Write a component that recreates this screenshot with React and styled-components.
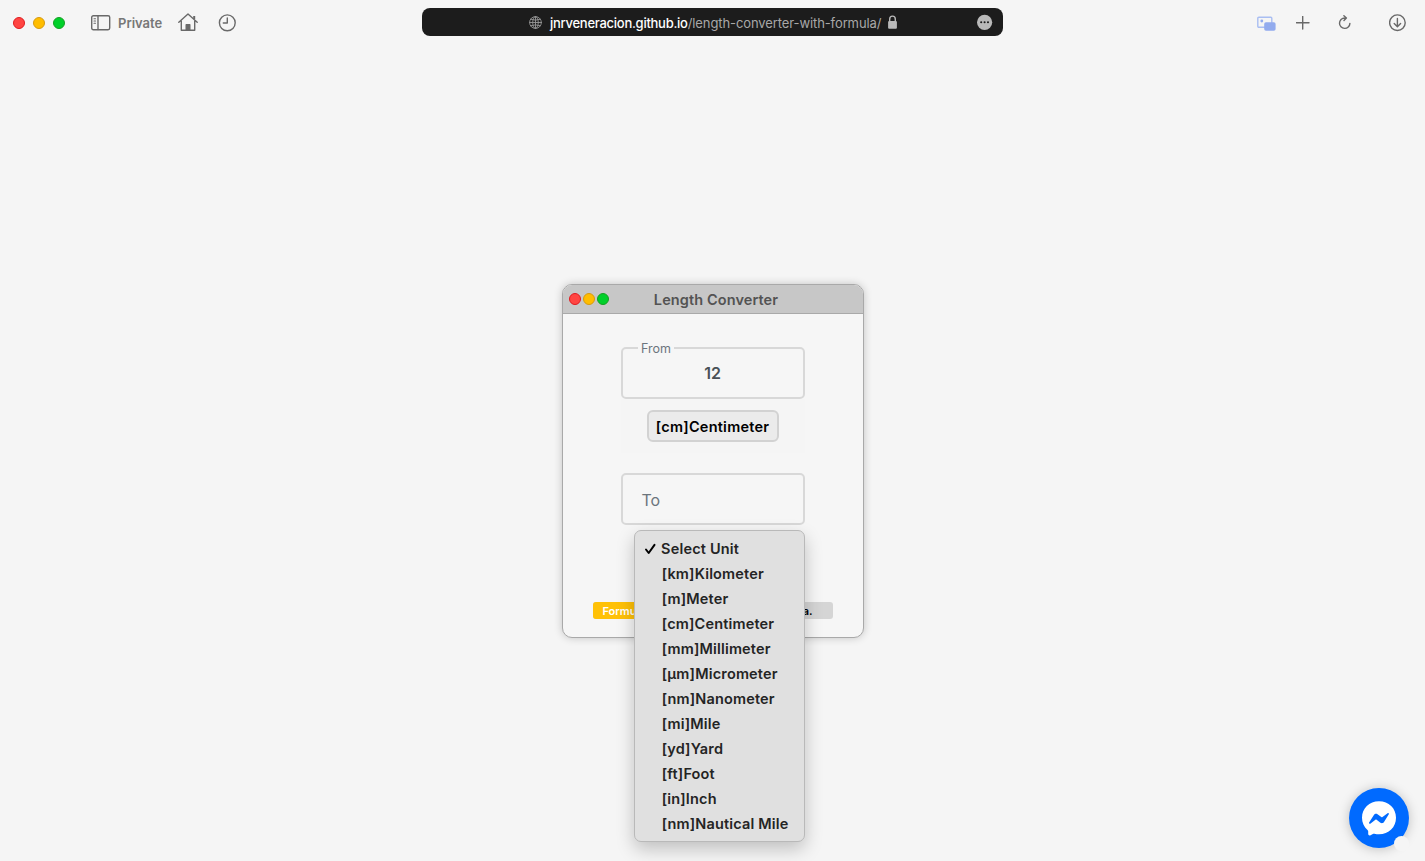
import React from "react";
import styled, { createGlobalStyle } from "styled-components";

const GlobalStyle = createGlobalStyle`
  * { box-sizing: border-box; }
  body {
    margin: 0;
    background: #f5f5f5;
    font-family: Inter, "Liberation Sans", sans-serif;
    overflow: hidden;
  }
`;

const Page = styled.div`
  height: 861px;
  display: flex;
  flex-direction: column;
  align-items: center;
  background: #f5f5f5;
`;

const Toolbar = styled.header`
  width: 100%;
  height: 45px;
  flex: none;
  display: grid;
  grid-template-columns: 422px 581px 1fr;
`;

const ToolGroup = styled.div`
  display: flex;
  align-items: center;
  height: 45px;
  padding-left: ${(p) => p.$inset}px;
  color: #696969;
`;

const Lights = styled.div`
  display: flex;
  gap: ${(p) => p.$gap}px;
`;

const Light = styled.span`
  width: 12px;
  height: 12px;
  border-radius: 50%;
  background: ${(p) => p.$fill};
  border: 1px solid ${(p) => p.$edge};
`;

const Icon = styled.svg`
  flex: none;
  display: block;
  margin-left: ${(p) => p.$gap || 0}px;
  fill: none;
  stroke: currentColor;
  stroke-width: ${(p) => p.$weight || 1.4};
  stroke-linecap: round;
  stroke-linejoin: round;
`;

const PrivateLabel = styled.span`
  margin-left: 7px;
  width: 45px;
  font-size: 13px;
  font-weight: 600;
  line-height: 18px;
  padding-top: 1px;
  color: #777;
`;

const AddressBar = styled.div`
  margin-top: 8px;
  height: 28px;
  border-radius: 8px;
  background: #1c1c1c;
  display: flex;
  align-items: center;
  padding: 0 10px 0 107px;
  color: #b9b9b9;
`;

const Url = styled.span`
  margin-left: 8px;
  width: 332px;
  font-size: 13px;
  line-height: 18px;
  padding-top: 2px;
  color: #a8a8a8;
  white-space: nowrap;
  letter-spacing: -0.1px;
`;

const Host = styled.span`
  color: #fff;
  font-weight: 500;
  letter-spacing: -0.27px;
`;

const Spacer = styled.span`
  flex: 1;
`;

const Window = styled.main`
  position: relative;
  width: 302px;
  height: 354px;
  margin-top: 239px;
  flex: none;
  border: 1px solid #a9a9a9;
  border-radius: 10px;
  background: #f6f6f6;
  box-shadow: 0 0 9px rgba(0, 0, 0, 0.2);
`;

const TitleBar = styled.div`
  height: 29px;
  display: grid;
  grid-template-columns: 47px 1fr 46px;
  align-items: center;
  padding-left: 6px;
  background: #c7c7c7;
  border-bottom: 1px solid #a9a9a9;
  border-radius: 9px 9px 0 0;
`;

const Title = styled.h1`
  margin: 0;
  padding-top: 1px;
  text-align: center;
  font-size: 14.5px;
  line-height: 20px;
  font-weight: 600;
  color: #535353;
  letter-spacing: 0.1px;
`;

const Form = styled.div`
  display: flex;
  flex-direction: column;
  align-items: center;
  padding-top: 33px;
`;

const Field = styled.div`
  position: relative;
  width: 184px;
  height: 52px;
  border: 2px solid #d8d8d8;
  border-radius: 5px;
  padding: ${(p) => (p.$filled ? 0 : 2)}px 19px 0;
  display: flex;
  align-items: center;
  justify-content: ${(p) => (p.$filled ? "center" : "flex-start")};
  font-size: 16px;
  font-weight: ${(p) => (p.$filled ? 600 : 400)};
  color: ${(p) => (p.$filled ? "#495057" : "#6c757d")};
`;

const FieldLabel = styled.span`
  position: absolute;
  left: 15px;
  top: -8px;
  padding: 0 3px 0 3.5px;
  background: #f6f6f6;
  font-size: 12.5px;
  font-weight: 400;
  line-height: 16px;
  color: #6c757d;
`;

const UnitArea = styled.div`
  width: 184px;
  height: 54px;
  margin-bottom: 20px;
  display: flex;
  justify-content: center;
  align-items: center;
  background: #f5f5f5;
`;

const UnitButton = styled.button`
  width: 132px;
  height: 32px;
  padding: 1px 0 0;
  border: 2px solid #d2d2d2;
  border-radius: 6px;
  background: #ebebeb;
  color: #000;
  font: 600 14.5px/20px Inter, sans-serif;
  letter-spacing: 0.24px;
  white-space: nowrap;
`;

const FormulaBar = styled.div`
  width: 240px;
  height: 17px;
  margin-top: 77px;
  display: flex;
  justify-content: space-between;
  font-size: 11px;
  line-height: 19px;
  border-radius: 3px;
  overflow: hidden;
  background: #d5d5d5;
  color: #000;
  font-weight: 600;
`;

const FormulaTag = styled.span`
  width: 60px;
  padding-left: 10px;
  color: #fff;
  background: #ffc107;
`;

const FormulaText = styled.span`
  padding-right: 20px;
`;

const Menu = styled.ul`
  position: absolute;
  left: 71px;
  top: 245px;
  width: 171px;
  height: 312px;
  margin: 0;
  padding: 5px 0;
  list-style: none;
  border: 1px solid #b9b9b9;
  border-radius: 7px;
  background: #e0e0e0;
  box-shadow: 0 7px 18px rgba(0, 0, 0, 0.22);
`;

const Option = styled.li`
  height: 25px;
  display: grid;
  grid-template-columns: ${(p) => (p.$checked ? 17.6 : 18.2)}px 1fr;
  align-items: center;
  padding: 1px 0 0 9px;
  font-size: 14.5px;
  line-height: 20px;
  font-weight: 600;
  color: #242424;
  white-space: nowrap;
`;

const OptionText = styled.span`
  grid-column: 2;
  letter-spacing: 0.17px;
`;

const Messenger = styled.button`
  position: fixed;
  right: 16px;
  bottom: 13px;
  width: 60px;
  height: 60px;
  padding: 0;
  border: 0;
  border-radius: 50%;
  background: #006aff;
  box-shadow: 0 1px 12px rgba(0, 0, 0, 0.22);
`;

const StatusDot = styled.span`
  position: absolute;
  right: 0;
  bottom: -3px;
  width: 15px;
  height: 15px;
  border-radius: 50%;
  background: #f5f5f5;
`;

const units = [
  "Select Unit", "[km]Kilometer", "[m]Meter", "[cm]Centimeter",
  "[mm]Millimeter", "[µm]Micrometer", "[nm]Nanometer", "[mi]Mile",
  "[yd]Yard", "[ft]Foot", "[in]Inch", "[nm]Nautical Mile",
];

function TrafficLights({ gap }) {
  return (
    <Lights $gap={gap}>
      <Light $fill="#ff4542" $edge="#e01b1f" />
      <Light $fill="#ffbd00" $edge="#d69a10" />
      <Light $fill="#00d02a" $edge="#15a022" />
    </Lights>
  );
}

export default function App() {
  return (
    <Page>
      <GlobalStyle />
      <Toolbar>
        <ToolGroup $inset={13}>
          <TrafficLights gap={8} />
          <Icon $gap={26} width="20" height="16" viewBox="0 0 20 16">
            <rect x="0.7" y="0.7" width="18" height="14" rx="1.6" />
            <path d="M7 1v13.5" />
            <path d="M3 3.700h1.500M3 6h1.500M3 8.300h1.500" strokeWidth="1.1" />
          </Icon>
          <PrivateLabel>Private</PrivateLabel>
          <Icon $gap={15} width="20" height="19" viewBox="0 0 20 19">
            <path d="M.8 9.200 10 1l9.200 8.200M3.300 7.700v9.500h13.400V7.700" />
            <path d="M16.200 6V3" strokeWidth="2" strokeLinecap="butt" />
            <path d="M8.200 17v-5.300h3.600V17z" fill="currentColor" />
          </Icon>
          <Icon $gap={20} width="18" height="18" viewBox="0 0 18 18">
            <circle cx="9.300" cy="8.800" r="7.900" />
            <path d="M9.300 4v5H5.300" />
          </Icon>
        </ToolGroup>
        <AddressBar>
          <Icon $weight={0.9} color="#969696" width="13" height="13" viewBox="0 0 13 13">
            <circle cx="6.5" cy="6.5" r="5.9" />
            <ellipse cx="6.5" cy="6.5" rx="2.8" ry="5.9" />
            <path d="M6.5.6v11.8M.6 6.5h11.8M1.6 3.3q4.9 1.8 9.8 0M1.6 9.7q4.9-1.8 9.8 0" />
          </Icon>
          <Url><Host>jnrveneracion.github.io</Host>/length-converter-with-formula/</Url>
          <Icon $gap={6} width="9" height="14" viewBox="0 0 9 14">
            <rect x=".1" y="6" width="8.800" height="7.800" rx="1" fill="currentColor" stroke="none" />
            <path d="M1.7 6V3.900a2.800 2.800 0 0 1 5.600 0V6" />
          </Icon>
          <Spacer />
          <Icon width="16" height="16" viewBox="0 0 16 16">
            <circle cx="7.600" cy="8.300" r="7.600" fill="currentColor" stroke="none" />
            <g fill="#1c1c1c" stroke="none">
              <circle cx="4.200" cy="8.300" r="1.050" /><circle cx="7.600" cy="8.300" r="1.050" /><circle cx="11" cy="8.300" r="1.050" />
            </g>
          </Icon>
        </AddressBar>
        <ToolGroup $inset={254}>
          <Icon width="19" height="16" viewBox="0 0 19 16">
            <rect x=".8" y="2.200" width="14" height="10" rx="1" stroke="#a9bef2" />
            <circle cx="4.8" cy="6" r="1.4" fill="#92abee" stroke="none" />
            <rect x="7.200" y="7.300" width="11.400" height="8.400" rx="1.800" fill="#92abee" stroke="none" />
          </Icon>
          <Icon $gap={20} width="14" height="14" viewBox="0 0 14 14">
            <path d="M6.700 .4v12.600M.4 6.700h12.600" />
          </Icon>
          <Icon $gap={28} width="14" height="16" viewBox="0 0 14 16">
            <path d="M7.700 3H6.700a5.200 5.200 0 1 0 5.200 5.400M5.900.7l2.500 2.300L6 5.400" />
          </Icon>
          <Icon $gap={37} width="18" height="18" viewBox="0 0 18 18">
            <circle cx="8.400" cy="8.700" r="7.800" /><path d="M8.400 4.500v8M5.200 9.500 8.400 12.700l3.200-3.200" />
          </Icon>
        </ToolGroup>
      </Toolbar>

      <Window>
        <TitleBar>
          <TrafficLights gap={2} />
          <Title>Length Converter</Title>
        </TitleBar>
        <Form>
          <Field $filled>
            <FieldLabel>From</FieldLabel>
            12
          </Field>
          <UnitArea><UnitButton>[cm]Centimeter</UnitButton></UnitArea>
          <Field>To</Field>
          <FormulaBar>
            <FormulaTag>Formula</FormulaTag>
            <FormulaText>a.</FormulaText>
          </FormulaBar>
        </Form>
        <Menu>
          {units.map((unit, i) => (
            <Option key={unit} $checked={i === 0}>
              {i === 0 && (
                <Icon $weight={2} color="#000" width="13" height="12" viewBox="0 0 13 12">
                  <path d="M2 6.5 4.7 10 10.5 1.8" />
                </Icon>
              )}
              <OptionText>{unit}</OptionText>
            </Option>
          ))}
        </Menu>
      </Window>

      <Messenger aria-label="Messenger">
        <svg width="60" height="60" viewBox="0 0 60 60">
          <path fill="#fff" d="M30 13.200C20.200 13.200 13 20.300 13 29.700c0 5 2 9.200 5.500 12.200.5.400.7.900.7 1.500v2.700c0 1 1 1.700 1.900 1.300l3.200-1.600c.4-.2.800-.2 1.200-.1 1.400.4 2.900.6 4.500.6 9.800 0 17-7.100 17-16.600S39.800 13.200 30 13.200z" />
          <path fill="#006aff" d="m20.100 34.600 4.800-7.700c.8-1.200 2.400-1.600 3.600-.7l3.800 2.900c.4.300.8.300 1.200 0l5.100-3.900c.7-.5 1.600.3 1.200 1.100l-4.800 7.700c-.8 1.200-2.400 1.600-3.600.7l-3.800-2.900c-.4-.3-.8-.3-1.200 0l-5.100 3.900c-.7.500-1.600-.3-1.200-1.100z" />
        </svg>
        <StatusDot />
      </Messenger>
    </Page>
  );
}
